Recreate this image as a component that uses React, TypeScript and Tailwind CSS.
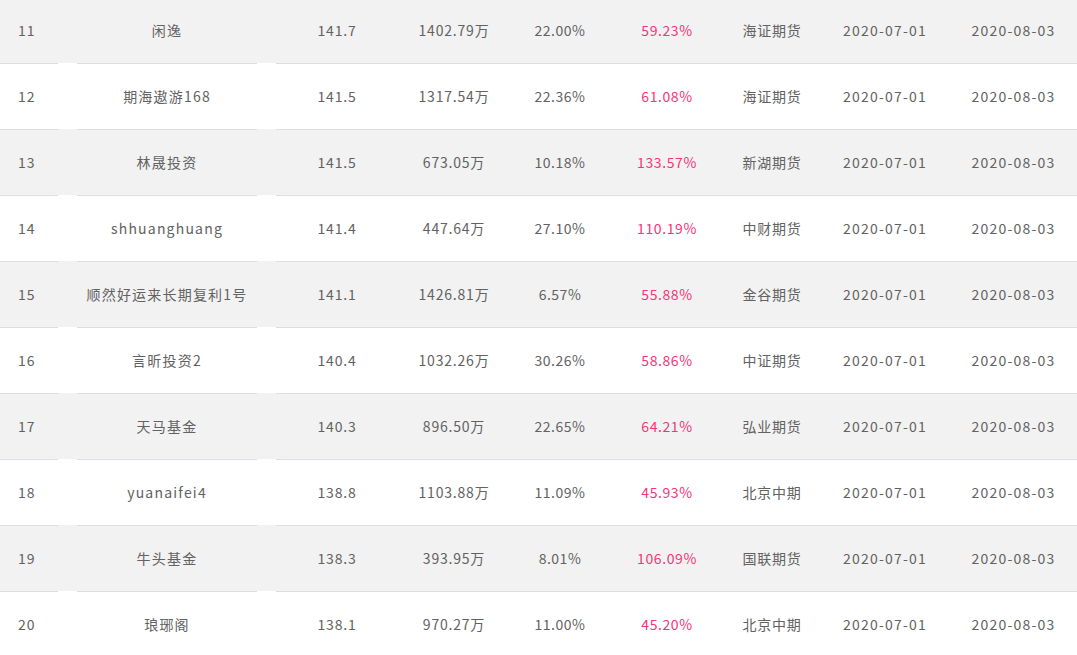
const rows = [
  { rank: 11, name: "闲逸", score: "141.7", assets: "1402.79万", drawdown: "22.00%", ret: "59.23%", broker: "海证期货" },
  { rank: 12, name: "期海遨游168", score: "141.5", assets: "1317.54万", drawdown: "22.36%", ret: "61.08%", broker: "海证期货" },
  { rank: 13, name: "林晟投资", score: "141.5", assets: "673.05万", drawdown: "10.18%", ret: "133.57%", broker: "新湖期货" },
  { rank: 14, name: "shhuanghuang", score: "141.4", assets: "447.64万", drawdown: "27.10%", ret: "110.19%", broker: "中财期货" },
  { rank: 15, name: "顺然好运来长期复利1号", score: "141.1", assets: "1426.81万", drawdown: "6.57%", ret: "55.88%", broker: "金谷期货" },
  { rank: 16, name: "言昕投资2", score: "140.4", assets: "1032.26万", drawdown: "30.26%", ret: "58.86%", broker: "中证期货" },
  { rank: 17, name: "天马基金", score: "140.3", assets: "896.50万", drawdown: "22.65%", ret: "64.21%", broker: "弘业期货" },
  { rank: 18, name: "yuanaifei4", score: "138.8", assets: "1103.88万", drawdown: "11.09%", ret: "45.93%", broker: "北京中期" },
  { rank: 19, name: "牛头基金", score: "138.3", assets: "393.95万", drawdown: "8.01%", ret: "106.09%", broker: "国联期货" },
  { rank: 20, name: "琅琊阁", score: "138.1", assets: "970.27万", drawdown: "11.00%", ret: "45.20%", broker: "北京中期" },
];

// cells carry their own top border; the two spacer columns have none
const cell = "flex h-[66px] items-center justify-center border-t border-[#dedce4]";
const spacer = "h-[66px]";

export default function App() {
  return (
    <div
      className="-mt-[3px] w-[1077px] overflow-hidden text-[14px] text-[#626262]"
      style={{ fontFamily: '"Noto Sans CJK SC", "Noto Sans", sans-serif' }}
    >
      {rows.map((r, i) => (
        <div
          key={r.rank}
          className={`grid grid-cols-[58px_19px_180px_19px_122px_112px_100px_114px_96px_130px_127px] ${
            i % 2 === 0 ? "bg-[#f2f2f2]" : "bg-white"
          }`}
        >
          <div className={`${cell} justify-start pl-[18px] tracking-[1px]`}>{r.rank}</div>
          <div className={spacer}></div>
          <div className={`${cell} tracking-[1.2px]`}>{r.name}</div>
          <div className={spacer}></div>
          <div className={`${cell} tracking-[0.8px]`}>{r.score}</div>
          <div className={`${cell} tracking-[0.8px]`}>{r.assets}</div>
          <div className={`${cell} tracking-[0.5px]`}>{r.drawdown}</div>
          <div className={`${cell} tracking-[0.6px] text-[#f4357a]`}>{r.ret}</div>
          <div className={`${cell} tracking-[0.8px]`}>{r.broker}</div>
          <div className={`${cell} tracking-[1.2px]`}>2020-07-01</div>
          <div className={`${cell} tracking-[1.2px]`}>2020-08-03</div>
        </div>
      ))}
    </div>
  );
}
